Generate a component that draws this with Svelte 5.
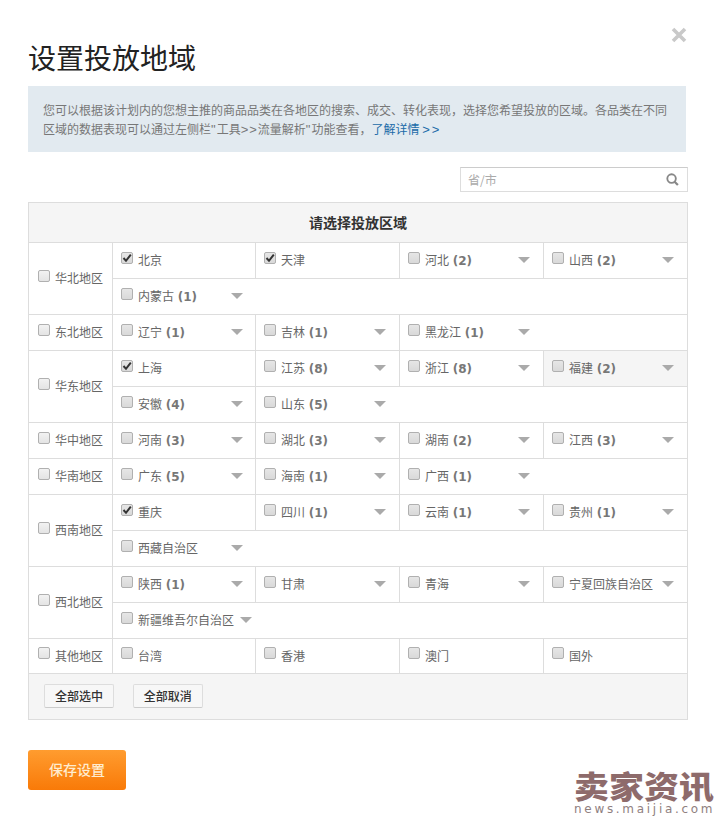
<script>
  const regions = [
    { name: '华北地区', rows: [[['北京', 0, 1], ['天津', 0, 1], ['河北', 2], ['山西', 2]], [['内蒙古', 1]]] },
    { name: '东北地区', rows: [[['辽宁', 1], ['吉林', 1], ['黑龙江', 1]]] },
    { name: '华东地区', rows: [[['上海', 0, 1], ['江苏', 8], ['浙江', 8], ['福建', 2, 0, 1]], [['安徽', 4], ['山东', 5]]] },
    { name: '华中地区', rows: [[['河南', 3], ['湖北', 3], ['湖南', 2], ['江西', 3]]] },
    { name: '华南地区', rows: [[['广东', 5], ['海南', 1], ['广西', 1]]] },
    { name: '西南地区', rows: [[['重庆', 0, 1], ['四川', 1], ['云南', 1], ['贵州', 1]], [['西藏自治区', -1]]] },
    { name: '西北地区', rows: [[['陕西', 1], ['甘肃', -1], ['青海', -1], ['宁夏回族自治区', -1]], [['新疆维吾尔自治区', -1]]] },
    { name: '其他地区', rows: [[['台湾', 0], ['香港', 0], ['澳门', 0], ['国外', 0]]] }
  ];
</script>

<div class="page">
  <svg class="close" width="16" height="16" viewBox="0 0 16 16" aria-label="关闭">
    <path d="M2 2 L14 14 M14 2 L2 14" stroke="#c9c9c9" stroke-width="3.6" fill="none" />
  </svg>

  <h1>设置投放地域</h1>

  <div class="notice">
    <div>您可以根据该计划内的您想主推的商品品类在各地区的搜索、成交、转化表现，选择您希望投放的区域。各品类在不同</div>
    <div>区域的数据表现可以通过左侧栏<span class="ascii">"</span>工具<span class="ascii">&gt;&gt;</span>流量解析<span class="ascii">"</span>功能查看，<a href="#more">了解详情 <span class="ascii wide">&gt;&gt;</span></a></div>
  </div>

  <div class="search-row">
    <div class="search">
      <span>省/市</span>
      <svg width="13" height="13" viewBox="0 0 14 14">
        <circle cx="6" cy="6" r="4.6" fill="none" stroke="#888" stroke-width="2" />
        <path d="M9 9.2 L12.8 13" stroke="#888" stroke-width="2.4" />
      </svg>
    </div>
  </div>

  <table>
    <colgroup>
      <col class="c0" /><col class="c1" /><col class="c2" /><col class="c2" /><col class="c2" />
    </colgroup>
    <thead>
      <tr><th colspan="5">请选择投放区域</th></tr>
    </thead>
    <tbody>
      {#each regions as region}
        {#each region.rows as row, ri}
          <tr>
            {#if ri === 0}
              <td class="region" rowspan={region.rows.length}>
                <span class="item"><i class="box plain"></i><span>{region.name}</span></span>
              </td>
            {/if}
            {#each row as cell, ci}
              <td class:hover={cell[3]} colspan={ci === row.length - 1 ? 5 - row.length : 1}>
                <span class="item">
                  <i class="box">
                    {#if cell[2]}
                      <svg width="10" height="10" viewBox="0 0 10 10"><path d="M1.5 5 L4 7.8 L8.8 1.6" fill="none" stroke="#333" stroke-width="2" /></svg>
                    {/if}
                  </i>
                  <span class="name">{cell[0]}{#if cell[1] > 0}&nbsp;<b>({cell[1]})</b>{/if}</span>
                  {#if cell[1] !== 0}<i class="caret"></i>{/if}
                </span>
              </td>
            {/each}
          </tr>
        {/each}
      {/each}
    </tbody>
    <tfoot>
      <tr>
        <td colspan="5" class="foot">
          <button>全部选中</button>
          <button>全部取消</button>
        </td>
      </tr>
    </tfoot>
  </table>

  <button class="save">保存设置</button>

  <div class="mark">
    <div class="mark-cn">卖家资讯</div>
    <div class="mark-en">news.maijia.com</div>
  </div>
</div>

<style>
  :global(body) {
    margin: 0;
    background: #fff;
  }
  .page {
    position: relative;
    width: 716px;
    height: 818px;
    box-sizing: border-box;
    padding: 37px 28px 0;
    overflow: hidden;
    font-family: "Noto Sans CJK SC", "Liberation Sans", sans-serif;
    font-size: 12px;
    color: #666;
  }
  .close {
    position: absolute;
    left: 671px;
    top: 27px;
  }
  h1 {
    margin: 0;
    font-size: 28px;
    line-height: 40px;
    font-weight: 400;
    color: #222;
  }
  .notice {
    box-sizing: border-box;
    width: 658px;
    height: 66px;
    margin-top: 9px;
    padding: 14px 15px;
    background: #e2eaf0;
    line-height: 19px;
    color: #777;
  }
  .notice a {
    color: #1a6aa8;
    text-decoration: none;
  }
  .ascii {
    font-family: "Liberation Sans", sans-serif;
    font-size: 13px;
    letter-spacing: 1px;
  }
  .ascii.wide {
    letter-spacing: 2px;
  }
  .search-row {
    display: flex;
    justify-content: flex-end;
    width: 660px;
    margin-top: 15px;
  }
  .search {
    box-sizing: border-box;
    width: 228px;
    height: 25px;
    display: flex;
    align-items: center;
    justify-content: space-between;
    padding: 0 8px 0 7px;
    border: 1px solid #ddd;
    border-top-color: #ccc;
    color: #aaa;
  }
  table {
    width: 659px;
    margin-top: 10px;
    border-collapse: collapse;
    table-layout: fixed;
  }
  .c0 {
    width: 84px;
  }
  .c1 {
    width: 143px;
  }
  .c2 {
    width: 144px;
  }
  th,
  td {
    padding: 0;
    border: 1px solid #ddd;
  }
  th {
    height: 37px;
    padding-bottom: 2px;
    background: #f5f5f5;
    font-weight: 700;
    font-size: 14px;
    color: #333;
  }
  td {
    height: 35px;
    padding-left: 8px;
    vertical-align: middle;
  }
  tbody tr:last-child td {
    height: 34px;
  }
  td.region {
    padding-left: 9px;
  }
  td.hover {
    background: #f5f5f5;
  }
  .item {
    display: flex;
    align-items: center;
    width: fit-content;
    min-width: 122px;
    height: 20px;
    margin-bottom: 2px;
    white-space: nowrap;
  }
  .region .item {
    min-width: 0;
  }
  .box {
    flex: none;
    box-sizing: border-box;
    width: 12px;
    height: 12px;
    margin: -4px 5px 0 0;
    display: flex;
    align-items: center;
    justify-content: center;
    border: 1px solid #b0b0b0;
    border-radius: 2px;
    background: linear-gradient(#e6e6e6, #d9d9d9);
  }
  .box.plain {
    background: linear-gradient(#f2f2f2, #e4e4e4);
  }
  .name b {
    margin-left: 1px;
    font-family: "DejaVu Sans", sans-serif;
    font-size: 12px;
    font-weight: 700;
    color: #777;
  }
  .caret {
    flex: none;
    width: 0;
    height: 0;
    margin-left: auto;
    border-style: solid;
    border-width: 6px 6px 0;
    border-color: #aaa transparent transparent;
  }
  .item .name {
    margin-right: 6px;
  }
  .foot {
    padding: 10px 0 0 15px;
    vertical-align: top;
    background: #f5f5f5;
  }
  .foot button {
    box-sizing: border-box;
    width: 70px;
    height: 24px;
    margin-right: 16px;
    padding: 0 0 2px;
    border: 1px solid #ddd;
    border-bottom-color: #ccc;
    border-radius: 2px;
    background: #f7f7f7;
    font: 500 12px "Noto Sans CJK SC", sans-serif;
    color: #333;
  }
  tfoot .foot {
    height: 35px;
  }
  .save {
    display: block;
    width: 98px;
    height: 40px;
    margin-top: 30px;
    padding: 0 0 2px;
    border: 0;
    border-radius: 3px;
    background: linear-gradient(#ff9c2f, #f97a08);
    font: 500 14px "Noto Sans CJK SC", sans-serif;
    color: #ffeccf;
  }
  .mark {
    position: absolute;
    left: 574px;
    top: 768px;
    width: 142px;
    color: #8e6b6b;
  }
  .mark-cn {
    font-size: 35px;
    line-height: 33px;
    height: 33px;
    font-weight: 900;
    white-space: nowrap;
    transform: scaleY(0.88);
  }
  .mark-en {
    margin-top: 3px;
    font-family: "DejaVu Sans", sans-serif;
    font-size: 12px;
    line-height: 10px;
    letter-spacing: 2.7px;
    white-space: nowrap;
    color: #8f8080;
  }
</style>
